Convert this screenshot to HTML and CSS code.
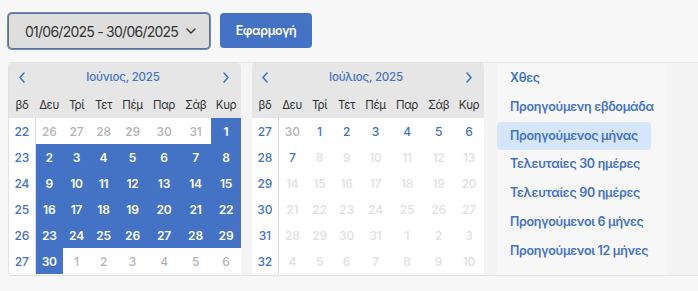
FILE: index.html
```html
<!DOCTYPE html>
<html lang="el">
<head>
  <meta charset="UTF-8" />
  <title>Επιλογή περιόδου</title>
  <link rel="stylesheet" href="styles.css">
</head>
<body>

<div class="toolbar">
  <button class="range-select">
    <span>01/06/2025 - 30/06/2025</span>
    <svg width="10" height="6" viewBox="0 0 10 6"><path d="M1 1l4 4 4-4" fill="none" stroke="#333" stroke-width="1.4" stroke-linecap="round" stroke-linejoin="round"/></svg>
  </button>
  <button class="apply">Εφαρμογή</button>
</div>

<div class="picker">
  <div class="month" id="june"></div>
  <div class="month" id="july"></div>
  <ul class="presets">
    <li>Χθες</li>
    <li>Προηγούμενη εβδομάδα</li>
    <li class="active">Προηγούμενος μήνας</li>
    <li>Τελευταίες 30 ημέρες</li>
    <li>Τελευταίες 90 ημέρες</li>
    <li>Προηγούμενοι 6 μήνες</li>
    <li>Προηγούμενοι 12 μήνες</li>
  </ul>
</div>

<script>
const dayNames = ["Δευ", "Τρί", "Τετ", "Πέμ", "Παρ", "Σάβ", "Κυρ"];

// o = άλλος μήνας, s = επιλεγμένη, n = κανονική, d = ανενεργή
const months = {
  june: {
    title: "Ιούνιος, 2025",
    weeks: [
      [22, ["26o","27o","28o","29o","30o","31o","1s"]],
      [23, ["2s","3s","4s","5s","6s","7s","8s"]],
      [24, ["9s","10s","11s","12s","13s","14s","15s"]],
      [25, ["16s","17s","18s","19s","20s","21s","22s"]],
      [26, ["23s","24s","25s","26s","27s","28s","29s"]],
      [27, ["30s","1o","2o","3o","4o","5o","6o"]]
    ]
  },
  july: {
    title: "Ιούλιος, 2025",
    weeks: [
      [27, ["30o","1n","2n","3n","4n","5n","6n"]],
      [28, ["7n","8d","9d","10d","11d","12d","13d"]],
      [29, ["14d","15d","16d","17d","18d","19d","20d"]],
      [30, ["21d","22d","23d","24d","25d","26d","27d"]],
      [31, ["28d","29d","30d","31d","1d","2d","3d"]],
      [32, ["4d","5d","6d","7d","8d","9d","10d"]]
    ]
  }
};

const classes = { o: "other", s: "sel", n: "cur", d: "off" };

const prev = '<svg width="8" height="11" viewBox="0 0 8 11"><path d="M6 1L2 5.5 6 10" fill="none" stroke="#4472c4" stroke-width="1.6" stroke-linecap="round" stroke-linejoin="round"/></svg>';
const next = '<svg width="8" height="11" viewBox="0 0 8 11"><path d="M2 1l4 4.5L2 10" fill="none" stroke="#4472c4" stroke-width="1.6" stroke-linecap="round" stroke-linejoin="round"/></svg>';

for (const id in months) {
  const m = months[id];
  let html = `<div class="nav"><span class="arrow">${prev}</span><span class="title">${m.title}</span><span class="arrow">${next}</span></div>`;
  html += `<table><colgroup><col class="c-wk"><col style="width:28px"><col style="width:27px"><col style="width:27px"><col style="width:31px"><col style="width:32px"><col style="width:31px"><col style="width:30px"></colgroup>`;
  html += `<thead><tr><th>βδ</th>${dayNames.map(d => `<th>${d}</th>`).join("")}</tr></thead><tbody>`;
  m.weeks.forEach(([wk, days]) => {
    html += `<tr><td class="wk">${wk}</td>`;
    days.forEach(d => {
      const type = d.slice(-1);
      html += `<td class="${classes[type]}">${d.slice(0, -1)}</td>`;
    });
    html += `</tr>`;
  });
  html += `</tbody></table>`;
  document.getElementById(id).innerHTML = html;
}
</script>

</body>
</html>
```

FILE: styles.css
```css
html, body {
  overflow: hidden;
}

body {
  font-family: Inter, "Noto Sans", sans-serif;
  background-color: #f7f7f7;
  margin: 0;
  padding: 13px 0 0 8px;
  color: #333;
}

.toolbar {
  display: flex;
  gap: 10px;
  height: 36px;
  margin-bottom: 13px;
}

.range-select {
  width: 202px;
  height: 36px;
  display: flex;
  align-items: center;
  gap: 8px;
  padding: 0 0 0 16px;
  background: #dedede;
  border: 1px solid #707070;
  border-radius: 4px;
  box-shadow: 0 0 0 1px #5b8ee0;
  font-family: inherit;
  font-size: 14px;
  font-weight: 400;
  letter-spacing: -0.75px;
  white-space: nowrap;
  color: #333;
}

.apply {
  width: 92px;
  height: 35px;
  background: #4472c4;
  border: none;
  border-radius: 4px;
  color: #fff;
  font-family: inherit;
  font-size: 12.5px;
  font-weight: 600;
  letter-spacing: -0.4px;
}

.picker {
  display: flex;
  width: 720px;
  height: 212px;
  border: 1px solid #e2e2e2;
  border-radius: 4px;
  background: #f4f4f4;
}

.month {
  width: 232px;
  background: #fff;
  border-radius: 4px 4px 0 0;
  overflow: hidden;
}

.month + .month {
  margin-left: 11px;
}

.nav {
  display: grid;
  grid-template-columns: 26px 1fr 30px;
  align-items: center;
  height: 28px;
  background: #e6e6e6;
}

.arrow {
  display: flex;
  justify-content: center;
}

.title {
  text-align: center;
  font-size: 11.5px;
  font-weight: 500;
  letter-spacing: -0.2px;
  color: #4472c4;
}

table {
  width: 232px;
  table-layout: fixed;
  border-collapse: collapse;
}

.c-wk {
  width: 26px;
}

th {
  height: 27px;
  padding: 0;
  background: #e6e6e6;
  font-size: 11.5px;
  font-weight: 400;
  letter-spacing: -0.4px;
  color: #333;
}

td {
  height: 26px;
  padding: 0;
  text-align: center;
  font-size: 12px;
  font-weight: 500;
  letter-spacing: -0.2px;
}

td.wk {
  color: #4472c4;
  border-right: 1px solid #dcdcdc;
}

td.other {
  color: #b4b4b4;
}

td.cur {
  color: #4472c4;
}

td.off {
  color: #e0e0e0;
}

td.sel {
  background: #4472c4;
  color: #fff;
  font-weight: 600;
}

.presets {
  list-style: none;
  margin: 1px 0 0 13px;
  padding: 0;
  display: flex;
  flex-direction: column;
  align-items: flex-start;
  background: #f7f7f7;
}

.presets li {
  height: 28.8px;
  line-height: 28.8px;
  padding: 0 13px;
  border-radius: 4px;
  font-size: 12.5px;
  font-weight: 600;
  letter-spacing: -0.3px;
  color: #4472c4;
}

.presets li.active {
  background: #d6e6fa;
}
```
